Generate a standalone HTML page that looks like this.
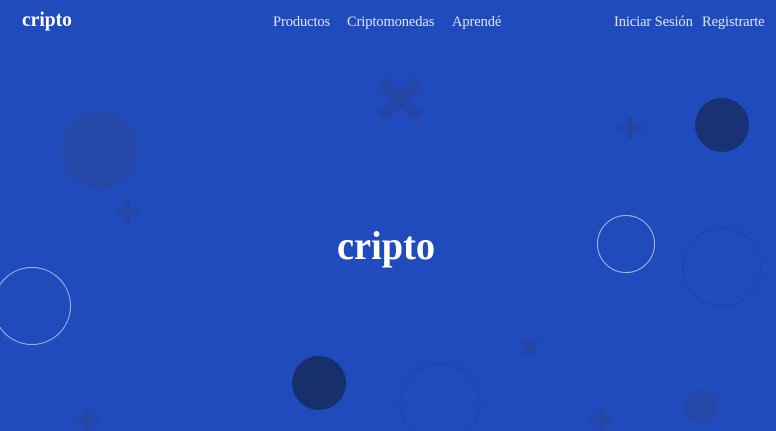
<!DOCTYPE html>
<html><head><meta charset="utf-8"><style>
html,body{margin:0;padding:0;width:776px;height:431px;overflow:hidden;background:#1f4bbd;font-family:"Liberation Serif",serif;}
.nav{position:absolute;top:14px;font-size:14.5px;color:#dde3f5;letter-spacing:-0.1px;}
.logo{position:absolute;font-weight:bold;color:#fff;transform-origin:0 0;}
</style></head><body>
<svg width="776" height="431" style="position:absolute;left:0;top:0">
<g fill="none">
<line x1="381" y1="81" x2="419" y2="118" stroke="#2546a6" stroke-width="11"/>
<line x1="419" y1="81" x2="381" y2="118" stroke="#2546a6" stroke-width="11"/>
<line x1="522" y1="340" x2="537" y2="355" stroke="#2546a6" stroke-width="5"/>
<line x1="537" y1="340" x2="522" y2="355" stroke="#2546a6" stroke-width="5"/>
</g>
<g stroke="#2546a6" stroke-width="6">
<line x1="618" y1="128" x2="643" y2="128"/><line x1="630" y1="116" x2="630" y2="140"/>
<line x1="115" y1="212" x2="140" y2="212"/><line x1="127" y1="200" x2="127" y2="224"/>
<line x1="73" y1="420" x2="98" y2="420"/><line x1="86" y1="408" x2="86" y2="432"/>
<line x1="590" y1="420" x2="614" y2="420"/><line x1="602" y1="408" x2="602" y2="432"/>
</g>
<circle cx="100" cy="150" r="39" fill="#2549a8"/>
<circle cx="722" cy="125" r="27" fill="#193273"/>
<circle cx="319" cy="383" r="27" fill="#172f6b"/>
<circle cx="701" cy="407" r="17" fill="#2447a8"/>
<circle cx="626" cy="244" r="28.5" fill="none" stroke="#a9b9e6" stroke-width="1"/>
<circle cx="32" cy="306" r="38.5" fill="none" stroke="#a9b9e6" stroke-width="1"/>
<circle cx="722" cy="267" r="39" fill="none" stroke="#2246a8" stroke-width="1.5"/>
<circle cx="440" cy="403" r="40" fill="none" stroke="#2246a8" stroke-width="1.5"/>
</svg>
<div class="logo" style="left:22px;top:7px;font-size:21px;transform:scaleX(0.93);">cripto</div>
<div class="nav" style="left:273px;">Productos</div>
<div class="nav" style="left:347px;">Criptomonedas</div>
<div class="nav" style="left:452px;">Aprendé</div>
<div class="nav" style="left:614px;">Iniciar Sesión</div>
<div class="nav" style="left:702px;">Registrarte</div>
<div class="logo" style="left:337px;top:222px;font-size:40px;transform:scaleX(0.96);">cripto</div>
</body></html>
